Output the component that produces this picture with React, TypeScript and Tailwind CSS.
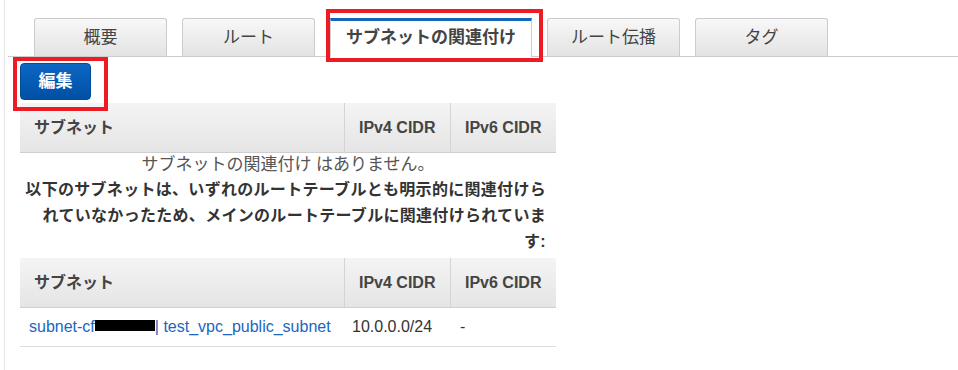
const TABS = ['概要', 'ルート', 'サブネットの関連付け', 'ルート伝播', 'タグ']
const ACTIVE = 2

function TableHeader() {
  return (
    <div className="grid h-[50px] grid-cols-[324px_106px_106px] border-b border-[#cfcfcf] bg-gradient-to-b from-[#f4f4f4] to-[#e5e5e5] text-[16px] font-bold text-[#444]">
      <div className="flex items-center px-[14px]">サブネット</div>
      <div className="flex items-center border-l border-[#d4d4d4] px-[14px]">IPv4 CIDR</div>
      <div className="flex items-center border-l border-[#d4d4d4] px-[14px]">IPv6 CIDR</div>
    </div>
  )
}

export default function App() {
  return (
    <div
      className="h-[370px] w-[958px] overflow-hidden bg-white pl-[4px]"
      style={{ fontFamily: '"Liberation Sans", "Noto Sans CJK JP", sans-serif' }}
    >
      <div className="relative h-full border-l border-[#e6e6e6]">
        {/* tabs */}
        <div className="ml-[3px] flex gap-[15px] border-b border-[#cccccc] pl-[26px] pt-[18px]">
          {TABS.map((t, i) =>
            i === ACTIVE ? (
              <div
                key={t}
                className="-mb-px flex h-[39px] w-[202px] items-center justify-center border-x border-t-[3px] border-x-[#cccccc] border-t-[#1166bb] bg-white pb-[2px] text-[17px] font-bold text-[#444]"
              >
                {t}
              </div>
            ) : (
              <div
                key={t}
                className="flex h-[38px] w-[133px] items-center justify-center rounded-t-[3px] border-x border-t border-[#cccccc] bg-gradient-to-b from-[#f8f8f8] to-[#e3e3e3] text-[17px] text-[#444]"
              >
                {t}
              </div>
            ),
          )}
        </div>

        {/* edit button */}
        <button className="ml-[15px] mt-[6px] flex h-[37px] w-[71px] items-center justify-center rounded-[4px] border border-[#004c99] bg-gradient-to-b from-[#0d67c4] to-[#0050a4] text-[17px] font-bold text-white">
          編集
        </button>

        {/* table */}
        <div className="ml-[15px] mt-[3px] w-[536px]">
          <TableHeader />
          <div className="pb-[3px]">
            <div className="text-center text-[17px] leading-[24px] text-[#555]">
              サブネットの関連付け はありません。
            </div>
            <div className="pr-[10px] text-right text-[16px] font-bold leading-[26px] tracking-[0.3px] text-[#333]">
              以下のサブネットは、いずれのルートテーブルとも明示的に関連付けら
              <br />
              れていなかったため、メインのルートテーブルに関連付けられていま
              <br />
              す:
            </div>
          </div>
          <TableHeader />
          <div className="grid h-[39px] grid-cols-[324px_106px_106px] items-center border-b border-[#dddddd] text-[16px]">
            <div className="whitespace-nowrap pl-[9px] text-[#1a66c0]">
              subnet-cf
              <span className="inline-block h-[11px] w-[60px] bg-black align-[1px]" />| test_vpc_public_subnet
            </div>
            <div className="pl-[8px] text-[#333]">10.0.0.0/24</div>
            <div className="pl-[10px] text-[#333]">-</div>
          </div>
        </div>

        {/* highlight boxes */}
        <div className="absolute left-[321px] top-[9px] h-[53px] w-[217px] border-4 border-[#ed1c24]" />
        <div className="absolute left-[8px] top-[57px] h-[54px] w-[95px] border-4 border-[#ed1c24]" />
      </div>
    </div>
  )
}
